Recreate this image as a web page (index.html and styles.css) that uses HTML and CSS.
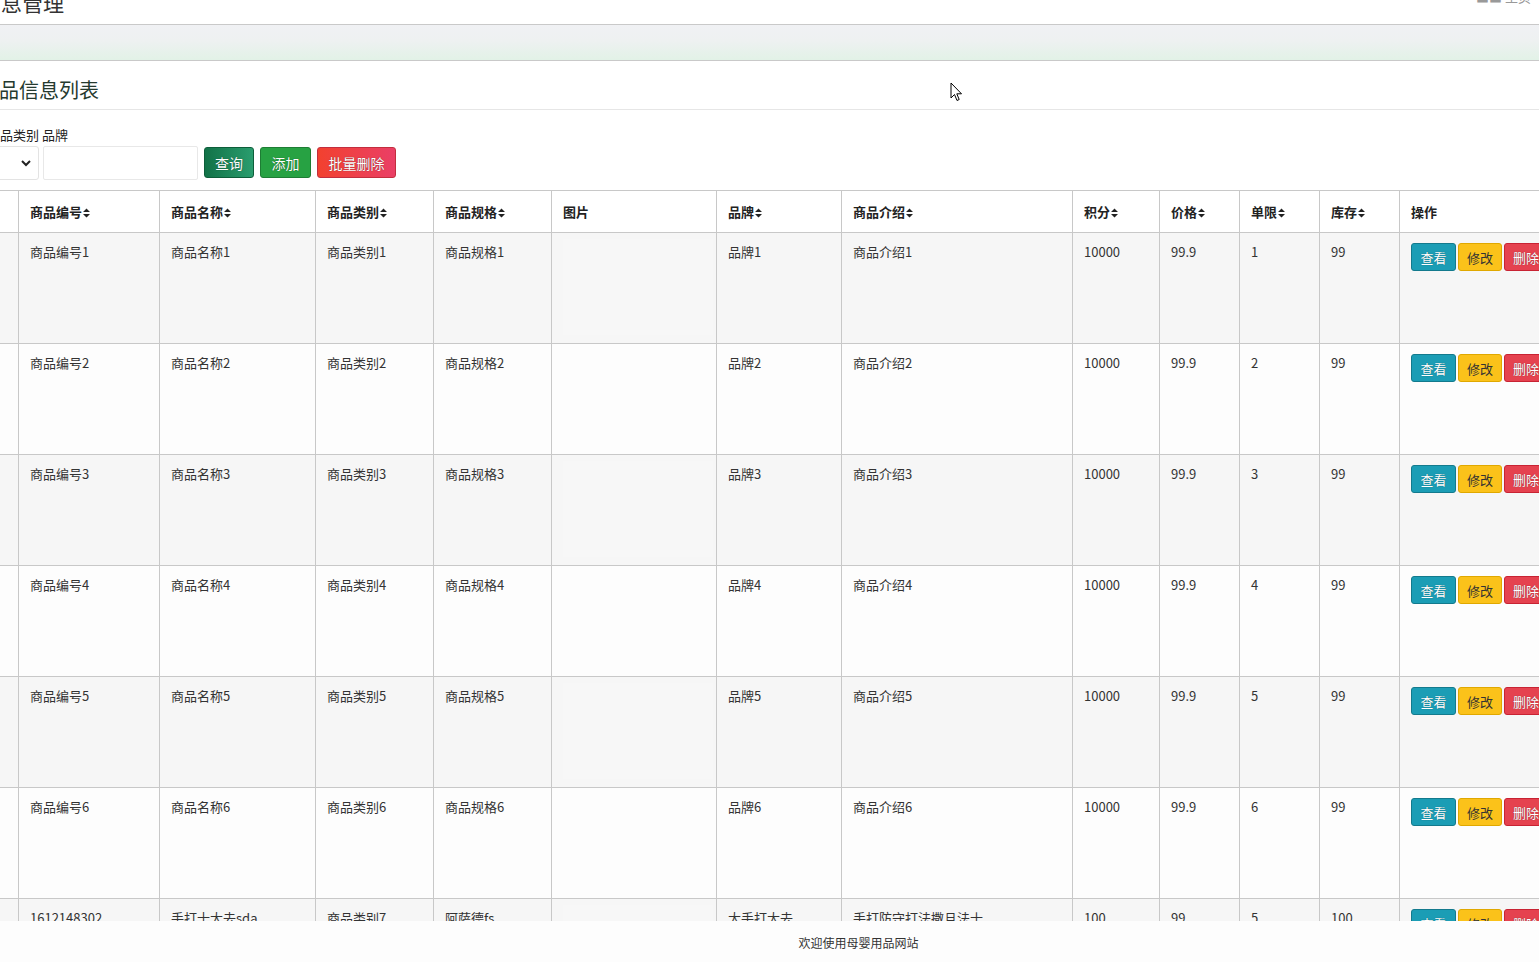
FILE: index.html
```html
<!DOCTYPE html>
<html lang="zh-CN">
<head>
<meta charset="utf-8">
<title>商品信息管理</title>
<link rel="stylesheet" href="styles.css">
</head>
<body>
<div class="page">
  <header class="topbar">
    <h1 class="app-title">商品信息管理</h1>
    <div class="top-right">■■ 主页</div>
  </header>
  <div class="band"></div>
  <h2 class="section-title">商品信息列表</h2>
  <form class="filters">
    <div class="labels"><span>商品类别</span> <span>品牌</span></div>
    <div class="controls">
      <div class="select"><svg width="10" height="8" viewBox="0 0 10 8"><path d="M1 2 L5 6 L9 2" fill="none" stroke="#222" stroke-width="2"/></svg></div>
      <div class="input"></div>
      <button type="button" class="btn btn-query">查询</button>
      <button type="button" class="btn btn-add">添加</button>
      <button type="button" class="btn btn-batch">批量删除</button>
    </div>
  </form>
  <table class="grid">
    <colgroup>
      <col class="c0"><col class="c1"><col class="c2"><col class="c3"><col class="c4"><col class="c5"><col class="c6"><col class="c7"><col class="c8"><col class="c9"><col class="c10"><col class="c11"><col class="c12">
    </colgroup>
    <thead>
      <tr>
        <th></th>
        <th>商品编号<svg class="sort" viewBox="0 0 7 10"><path d="M0 4 L3.5 0.5 L7 4Z M0 6 L3.5 9.5 L7 6Z"/></svg></th>
        <th>商品名称<svg class="sort" viewBox="0 0 7 10"><path d="M0 4 L3.5 0.5 L7 4Z M0 6 L3.5 9.5 L7 6Z"/></svg></th>
        <th>商品类别<svg class="sort" viewBox="0 0 7 10"><path d="M0 4 L3.5 0.5 L7 4Z M0 6 L3.5 9.5 L7 6Z"/></svg></th>
        <th>商品规格<svg class="sort" viewBox="0 0 7 10"><path d="M0 4 L3.5 0.5 L7 4Z M0 6 L3.5 9.5 L7 6Z"/></svg></th>
        <th>图片</th>
        <th>品牌<svg class="sort" viewBox="0 0 7 10"><path d="M0 4 L3.5 0.5 L7 4Z M0 6 L3.5 9.5 L7 6Z"/></svg></th>
        <th>商品介绍<svg class="sort" viewBox="0 0 7 10"><path d="M0 4 L3.5 0.5 L7 4Z M0 6 L3.5 9.5 L7 6Z"/></svg></th>
        <th>积分<svg class="sort" viewBox="0 0 7 10"><path d="M0 4 L3.5 0.5 L7 4Z M0 6 L3.5 9.5 L7 6Z"/></svg></th>
        <th>价格<svg class="sort" viewBox="0 0 7 10"><path d="M0 4 L3.5 0.5 L7 4Z M0 6 L3.5 9.5 L7 6Z"/></svg></th>
        <th>单限<svg class="sort" viewBox="0 0 7 10"><path d="M0 4 L3.5 0.5 L7 4Z M0 6 L3.5 9.5 L7 6Z"/></svg></th>
        <th>库存<svg class="sort" viewBox="0 0 7 10"><path d="M0 4 L3.5 0.5 L7 4Z M0 6 L3.5 9.5 L7 6Z"/></svg></th>
        <th>操作</th>
      </tr>
    </thead>
    <tbody>
      <tr><td></td><td>商品编号1</td><td>商品名称1</td><td>商品类别1</td><td>商品规格1</td><td><div class="pic"></div></td><td>品牌1</td><td>商品介绍1</td><td>10000</td><td>99.9</td><td>1</td><td>99</td><td class="ops"><button type="button" class="op op-view">查看</button><button type="button" class="op op-edit">修改</button><button type="button" class="op op-del">删除</button></td></tr>
      <tr><td></td><td>商品编号2</td><td>商品名称2</td><td>商品类别2</td><td>商品规格2</td><td><div class="pic"></div></td><td>品牌2</td><td>商品介绍2</td><td>10000</td><td>99.9</td><td>2</td><td>99</td><td class="ops"><button type="button" class="op op-view">查看</button><button type="button" class="op op-edit">修改</button><button type="button" class="op op-del">删除</button></td></tr>
      <tr><td></td><td>商品编号3</td><td>商品名称3</td><td>商品类别3</td><td>商品规格3</td><td><div class="pic"></div></td><td>品牌3</td><td>商品介绍3</td><td>10000</td><td>99.9</td><td>3</td><td>99</td><td class="ops"><button type="button" class="op op-view">查看</button><button type="button" class="op op-edit">修改</button><button type="button" class="op op-del">删除</button></td></tr>
      <tr><td></td><td>商品编号4</td><td>商品名称4</td><td>商品类别4</td><td>商品规格4</td><td><div class="pic"></div></td><td>品牌4</td><td>商品介绍4</td><td>10000</td><td>99.9</td><td>4</td><td>99</td><td class="ops"><button type="button" class="op op-view">查看</button><button type="button" class="op op-edit">修改</button><button type="button" class="op op-del">删除</button></td></tr>
      <tr><td></td><td>商品编号5</td><td>商品名称5</td><td>商品类别5</td><td>商品规格5</td><td><div class="pic"></div></td><td>品牌5</td><td>商品介绍5</td><td>10000</td><td>99.9</td><td>5</td><td>99</td><td class="ops"><button type="button" class="op op-view">查看</button><button type="button" class="op op-edit">修改</button><button type="button" class="op op-del">删除</button></td></tr>
      <tr><td></td><td>商品编号6</td><td>商品名称6</td><td>商品类别6</td><td>商品规格6</td><td><div class="pic"></div></td><td>品牌6</td><td>商品介绍6</td><td>10000</td><td>99.9</td><td>6</td><td>99</td><td class="ops"><button type="button" class="op op-view">查看</button><button type="button" class="op op-edit">修改</button><button type="button" class="op op-del">删除</button></td></tr>
      <tr><td></td><td>1612148302</td><td>手打十大去sda</td><td>商品类别7</td><td>阿萨德fs</td><td><div class="pic"></div></td><td>大手打大去</td><td>手打防守打法撒旦法士</td><td>100</td><td>99</td><td>5</td><td>100</td><td class="ops"><button type="button" class="op op-view">查看</button><button type="button" class="op op-edit">修改</button><button type="button" class="op op-del">删除</button></td></tr>
    </tbody>
  </table>
</div>
<footer class="footer">欢迎使用母婴用品网站</footer>
<svg class="cursor" width="14" height="21" viewBox="0 0 14 21"><path d="M1 1 L1 16 L4.5 12.5 L7 18.5 L9.2 17.5 L6.8 11.8 L11.5 11.8 Z" fill="#fff" stroke="#000" stroke-width="1" stroke-linejoin="round"/></svg>
</body>
</html>
```
FILE: styles.css
```css
html, body {
  margin: 0;
  padding: 0;
  background: #fff;
  overflow: hidden;
  height: 100%;
}
body {
  font-family: "Noto Sans CJK SC", "Noto Sans", "Liberation Sans", sans-serif;
  color: #333;
  font-size: 13px;
}
.page {
  margin-left: -62px;
  width: 1720px;
}
.topbar {
  height: 24px;
  border-bottom: 1px solid #c9c9c9;
  display: flex;
  justify-content: space-between;
  align-items: flex-start;
  width: 1601px;
}
.app-title {
  margin: -12px 0 0 0;
  font-size: 21px;
  line-height: 28px;
  font-weight: normal;
  color: #333;
}
.top-right {
  margin-top: -13px;
  margin-right: 8px;
  font-size: 13px;
  line-height: 20px;
  color: #999;
}
.band {
  height: 35px;
  background: linear-gradient(to bottom, #f0f1f4 0%, #eef1f1 45%, #e2f2e7 100%);
  border-bottom: 1px solid #c9c9c9;
  width: 1601px;
}
.section-title {
  margin: 15px 0 0 0;
  padding: 0 0 5px 41px;
  font-size: 20px;
  line-height: 28px;
  font-weight: normal;
  color: #253a2f;
  border-bottom: 1px solid #e6e6e6;
  width: 1560px;
}
.filters {
  margin: 0;
  padding-left: 49px;
}
.labels {
  margin-top: 16px;
  font-size: 13px;
  line-height: 18px;
  color: #222;
}
.controls {
  margin-top: 2px;
  display: flex;
  align-items: flex-start;
  height: 34px;
}
.select {
  width: 43px;
  height: 32px;
  border: 1px solid #e3e3e3;
  border-radius: 3px;
  display: flex;
  align-items: center;
  justify-content: flex-end;
  padding-right: 7px;
}
.input {
  margin-left: 4px;
  width: 153px;
  height: 32px;
  border: 1px solid #e8e8e8;
  border-radius: 2px;
}
.btn {
  height: 31px;
  margin-top: 1px;
  margin-left: 6px;
  border-radius: 3px;
  color: #fff;
  font-family: inherit;
  font-size: 14px;
  padding: 0;
  text-shadow: 0 0 1px rgba(0,0,0,0.6);
  cursor: pointer;
}
.btn-query {
  width: 50px;
  background: linear-gradient(to right, #127248, #2a9d6e);
  border: 1px solid #0d5e3a;
}
.btn-add {
  width: 51px;
  background: #27a243;
  border: 1px solid #1e7d34;
}
.btn-batch {
  width: 79px;
  background: linear-gradient(to right, #f2412f, #ea3f66);
  border: 1px solid #c22e3e;
}
.grid {
  margin-top: 10px;
  margin-left: 40px;
  border-collapse: collapse;
  table-layout: fixed;
  width: 1621px;
}
.c0 { width: 40px; }
.c1 { width: 141px; }
.c2 { width: 156px; }
.c3 { width: 118px; }
.c4 { width: 118px; }
.c5 { width: 165px; }
.c6 { width: 125px; }
.c7 { width: 231px; }
.c8 { width: 87px; }
.c9 { width: 80px; }
.c10 { width: 80px; }
.c11 { width: 80px; }
.c12 { width: 200px; }
.grid th, .grid td {
  border: 1px solid #c8c8c8;
  padding: 0 11px;
  text-align: left;
  overflow: hidden;
  white-space: nowrap;
}
.grid th {
  height: 41px;
  font-size: 13px;
  font-weight: bold;
  color: #222;
  vertical-align: middle;
  background: #fff;
}
.grid td {
  height: 100px;
  padding-top: 10px;
  vertical-align: top;
  font-size: 13px;
  line-height: 18px;
  color: #333;
}
.grid tbody tr:nth-child(odd) td { background: #f6f6f6; }
.grid tbody tr:nth-child(even) td { background: #fdfdfd; }
.sort {
  width: 7px;
  height: 10px;
  margin-left: 1px;
  fill: #222;
  vertical-align: -1px;
}
.pic {
  width: 150px;
  height: 96px;
  margin-top: -4px;
  background: rgba(255,255,255,0.15);
}
.ops { font-size: 0; }
.op {
  height: 28px;
  border-radius: 3px;
  font-family: inherit;
  font-size: 13px;
  padding: 0;
  margin-right: 2px;
  cursor: pointer;
  vertical-align: top;
}
.op-view {
  width: 45px;
  background: #1b9db5;
  border: 1px solid #137a8d;
  color: #fff;
  text-shadow: 0 0 1px rgba(0,0,0,0.5);
}
.op-edit {
  width: 44px;
  background: #fbc21a;
  border: 1px solid #e0a800;
  color: #333;
}
.op-del {
  width: 44px;
  background: #e5424f;
  border: 1px solid #c82333;
  color: #fff;
  text-shadow: 0 0 1px rgba(0,0,0,0.5);
}
.footer {
  position: fixed;
  left: 0;
  right: 0;
  bottom: 0;
  height: 41px;
  background: #fdfdfd;
  padding-left: 178px;
  text-align: center;
  font-size: 12px;
  line-height: 44px;
  color: #333;
}
.cursor {
  position: absolute;
  left: 950px;
  top: 82px;
}
```
